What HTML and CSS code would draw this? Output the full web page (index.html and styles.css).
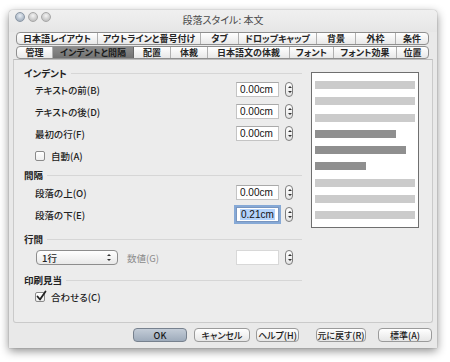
FILE: index.html
```html
<!DOCTYPE html>
<html lang="ja">
<head>
<meta charset="utf-8">
<title>段落スタイル: 本文</title>
<link rel="stylesheet" href="styles.css">
</head>
<body>
<div class="window">
  <div class="titlebar">
    <div class="lights"><span class="light first"></span><span class="light"></span><span class="light"></span></div>
    <div class="title">段落スタイル: 本文</div>
  </div>
  <div class="tabs">
    <div class="tabrow">
      <div class="tab" style="width:81px">日本語レイアウト</div>
      <div class="tab" style="width:103px">アウトラインと番号付け</div>
      <div class="tab" style="width:38px">タブ</div>
      <div class="tab" style="width:78px">ドロップキャップ</div>
      <div class="tab" style="width:39px">背景</div>
      <div class="tab" style="width:40px">外枠</div>
      <div class="tab" style="width:34px">条件</div>
    </div>
    <div class="tabrow">
      <div class="tab" style="width:36px">管理</div>
      <div class="tab sel" style="width:81px">インデントと間隔</div>
      <div class="tab" style="width:37px">配置</div>
      <div class="tab" style="width:37px">体裁</div>
      <div class="tab" style="width:82px">日本語文の体裁</div>
      <div class="tab" style="width:44px">フォント</div>
      <div class="tab" style="width:63px">フォント効果</div>
      <div class="tab" style="width:33px">位置</div>
    </div>
  </div>
  <div class="panel">
    <div class="left">
      <div class="head h1"><span>インデント</span><i></i></div>
      <div class="row r1"><span class="lbl">テキストの前(B)</span><span class="field">0.00cm</span><span class="spin"></span></div>
      <div class="row r2"><span class="lbl">テキストの後(D)</span><span class="field">0.00cm</span><span class="spin"></span></div>
      <div class="row r2"><span class="lbl">最初の行(F)</span><span class="field">0.00cm</span><span class="spin"></span></div>
      <div class="check c1"><span class="box"></span><span>自動(A)</span></div>
      <div class="head h2"><span>間隔</span><i></i></div>
      <div class="row r3"><span class="lbl">段落の上(O)</span><span class="field">0.00cm</span><span class="spin"></span></div>
      <div class="row r2"><span class="lbl">段落の下(E)</span><span class="field focus"><span class="hl">0.21cm</span></span><span class="spin"></span></div>
      <div class="head h3"><span>行間</span><i></i></div>
      <div class="row sel-row"><span class="select">1行<span class="arrows"></span></span><span class="lbl dim">数値(G)</span><span class="field"></span><span class="spin"></span></div>
      <div class="head h4"><span>印刷見当</span><i></i></div>
      <div class="check c2"><span class="box checked"><svg viewBox="0 0 12 12" width="12" height="12"><path d="M2.5 6.5 L5 9.5 L10.5 1.5" fill="none" stroke="#222" stroke-width="1.8" stroke-linecap="round" stroke-linejoin="round"/></svg></span><span>合わせる(C)</span></div>
    </div>
    <div class="preview">
      <div class="bar"></div>
      <div class="bar"></div>
      <div class="bar"></div>
      <div class="bar dark" style="width:81px"></div>
      <div class="bar dark" style="width:91px"></div>
      <div class="bar dark" style="width:51px"></div>
      <div class="bar"></div>
      <div class="bar"></div>
      <div class="bar"></div>
    </div>
  </div>
  <div class="buttons">
    <div class="btn ok">OK</div>
    <div class="btn b-cancel">キャンセル</div>
    <div class="btn b-help">ヘルプ(H)</div>
    <div class="btn b-undo">元に戻す(R)</div>
    <div class="btn b-std">標準(A)</div>
  </div>
</div>
</body>
</html>
```
FILE: styles.css
```css
* { box-sizing: border-box; }
html, body { margin: 0; padding: 0; background: #ffffff; }
body {
  width: 450px; height: 362px; overflow: hidden;
  font-family: "Noto Sans CJK JP", "Liberation Sans", sans-serif;
  font-feature-settings: "palt";
  font-size: 10px; color: #222;
}
.window {
  margin: 10px 0 0 9px;
  width: 428px; height: 338px;
  background: #e9e9e9;
  border-radius: 4px 4px 0 0;
  box-shadow: 0 3px 10px rgba(0,0,0,0.45), 0 0 1px rgba(0,0,0,0.5);
  display: flex; flex-direction: column;
  padding-bottom: 6px;
}
.titlebar {
  height: 22px; position: relative;
  background: linear-gradient(#f0f0f0, #e6e6e6);
  border-radius: 4px 4px 0 0;
  display: flex; align-items: center; justify-content: center;
}
.lights { position: absolute; left: 6px; top: 2px; display: flex; gap: 3px; }
.light {
  width: 10px; height: 10px; border-radius: 50%;
  background: radial-gradient(circle at 50% 35%, #f4f4f4, #c4c4c4 70%);
  border: 1px solid #a7a7a7;
}
.light.first { background: radial-gradient(circle at 50% 35%, #e8eef5, #a9b5c3 70%); border-color: #8b97a5; }
.title { font-size: 10px; color: #4a4a4a; margin-top: -4px; font-weight: 400; }
.tabs { padding: 0 8px 0 7px; display: flex; flex-direction: column; gap: 1px; }
.tabrow {
  display: flex; height: 13px;
  border: 1px solid #8f8f8f; border-radius: 4px;
  background: linear-gradient(#ffffff, #e8e8e8);
  overflow: hidden;
}
.tab {
  display: flex; align-items: center; justify-content: center;
  font-size: 9px; font-weight: 700; color: #262626;
  border-right: 1px solid #b0b0b0; white-space: nowrap; line-height: 1;
  flex: none;
}
.tab:last-child { border-right: none; flex: 1; }
.tab.sel { background: linear-gradient(#8c8c8c, #727272); color: #1c1c1c; border-right-color: #666; }
.panel {
  margin: 0 4px;
  height: 264px;
  border: 1px solid #cacaca; border-top-color: #bdbdbd;
  border-radius: 0 0 3px 3px;
  background: #ececec;
  display: flex;
  padding-left: 10px;
}
.left { width: 278px; display: flex; flex-direction: column; padding-top: 6px; }
.head { height: 14px; display: flex; align-items: center; gap: 4px; font-weight: 700; font-size: 9.5px; color: #222; }
.head i { flex: 1; height: 1px; background: #d6d6d6; }
.h2 { margin-top: 5px; }
.h3 { margin-top: 10px; }
.h4 { margin-top: 8px; }
.row { height: 15px; display: flex; align-items: center; padding-left: 11px; }
.r1 { margin-top: 2px; }
.r2 { margin-top: 7px; }
.r3 { margin-top: 3px; }
.lbl { width: 201px; font-weight: 500; font-size: 9.5px; }
.field {
  width: 43px; height: 15px; background: #fff;
  border: 1px solid #c4c4c4; border-top-color: #a9a9a9;
  font-family: "Liberation Sans", sans-serif; font-size: 10px;
  display: flex; align-items: center; padding-left: 3px; color: #111;
}
.field.focus { box-shadow: 0 0 0 2px #86a9d6; border-color: #7996c0; }
.hl { background: #b4d3fb; padding: 0 1px; }
.spin {
  margin-left: 6px; width: 8px; height: 15px;
  border: 1px solid #7d7d7d; border-radius: 4px;
  background: linear-gradient(#ffffff, #e4e4e4);
  position: relative;
}
.spin::before, .spin::after {
  content: ""; position: absolute; left: 1.5px;
  border-left: 2px solid transparent; border-right: 2px solid transparent;
}
.spin::before { top: 3px; border-bottom: 2px solid #333; }
.spin::after { bottom: 3px; border-top: 2px solid #333; }
.check { height: 14px; display: flex; align-items: center; gap: 6px; padding-left: 11px; font-weight: 500; font-size: 9.5px; }
.c1 { margin-top: 8px; }
.c2 { margin-top: 3px; }
.box {
  width: 10px; height: 10px; background: linear-gradient(#fff, #eee);
  border: 1px solid #8a8a8a; border-radius: 2px; position: relative;
}
.box svg { position: absolute; left: -1px; top: -3px; }
.sel-row { margin-top: 4px; padding-left: 12px; }
.select {
  width: 82px; height: 15px; border: 1px solid #8d8d8d; border-radius: 4px;
  background: linear-gradient(#ffffff, #e9e9e9);
  display: flex; align-items: center; padding-left: 5px; position: relative;
  font-weight: 500; font-size: 9.5px;
}
.arrows { position: absolute; right: 6px; top: 3px; width: 4px; height: 7px; }
.arrows::before, .arrows::after {
  content: ""; position: absolute; left: 0;
  border-left: 2px solid transparent; border-right: 2px solid transparent;
}
.arrows::before { top: 0; border-bottom: 2.5px solid #333; }
.arrows::after { bottom: 0; border-top: 2.5px solid #333; }
.lbl.dim { width: 109px; margin-left: 9px; color: #8a8a8a; font-weight: 400; }
.field:empty { border-color: #d8d8d8; }
.preview {
  margin: 12px 0 0 9px; width: 108px; height: 156px;
  background: #fff; border: 1px solid #6f6f6f;
  padding: 8px 3px 0 3px;
  display: flex; flex-direction: column; gap: 8.25px;
}
.bar { height: 8px; width: 100px; background: #cbcbcb; flex: none; }
.bar.dark { background: #8f8f8f; }
.buttons { display: flex; height: 14px; margin-top: 5px; }
.btn {
  height: 14px; border: 1px solid #9a9a9a; border-radius: 4px;
  background: linear-gradient(#ffffff, #e6e6e6);
  display: flex; align-items: center; justify-content: center;
  font-size: 9px; font-weight: 500; color: #1a1a1a; white-space: nowrap;
}
.ok { margin-left: 124px; width: 54px; background: linear-gradient(#c3ccd7, #9eabbb); border-color: #77818e; }
.b-cancel { margin-left: 7px; width: 56px; }
.b-help { margin-left: 6px; width: 43px; }
.b-undo { margin-left: 17px; width: 50px; }
.b-std { margin-left: 12px; width: 54px; }
```
